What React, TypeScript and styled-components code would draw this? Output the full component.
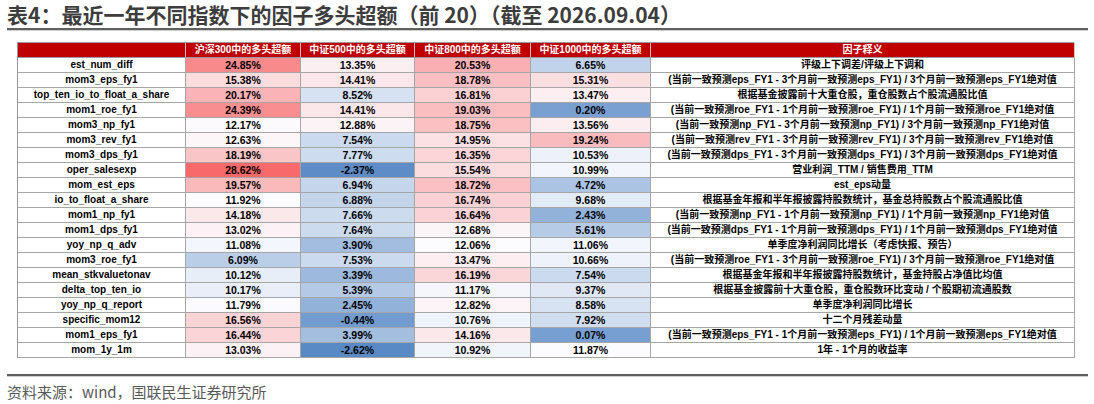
import React from "react";
import styled, { createGlobalStyle } from "styled-components";

const GlobalStyle = createGlobalStyle`
  html, body { margin: 0; padding: 0; background: #ffffff; }
  body { font-family: "Liberation Sans", "Noto Sans CJK SC", sans-serif; }
`;

type Row = [string, number, number, number, number, string];

const rows: Row[] = [
  ["est_num_diff", 24.85, 13.35, 20.53, 6.65, "评级上下调差/评级上下调和"],
  ["mom3_eps_fy1", 15.38, 14.41, 18.78, 15.31, "(当前一致预测eps_FY1 - 3个月前一致预测eps_FY1) / 3个月前一致预测eps_FY1绝对值"],
  ["top_ten_io_to_float_a_share", 20.17, 8.52, 16.81, 13.47, "根据基金披露前十大重仓股，重仓股数占个股流通股比值"],
  ["mom1_roe_fy1", 24.39, 14.41, 19.03, 0.2, "(当前一致预测roe_FY1 - 1个月前一致预测roe_FY1) / 1个月前一致预测roe_FY1绝对值"],
  ["mom3_np_fy1", 12.17, 12.88, 18.75, 13.56, "(当前一致预测np_FY1 - 3个月前一致预测np_FY1) / 3个月前一致预测np_FY1绝对值"],
  ["mom3_rev_fy1", 12.63, 7.54, 14.95, 19.24, "(当前一致预测rev_FY1 - 3个月前一致预测rev_FY1) / 3个月前一致预测rev_FY1绝对值"],
  ["mom3_dps_fy1", 18.19, 7.77, 16.35, 10.53, "(当前一致预测dps_FY1 - 3个月前一致预测dps_FY1) / 3个月前一致预测dps_FY1绝对值"],
  ["oper_salesexp", 28.62, -2.37, 15.54, 10.99, "营业利润_TTM / 销售费用_TTM"],
  ["mom_est_eps", 19.57, 6.94, 18.72, 4.72, "est_eps动量"],
  ["io_to_float_a_share", 11.92, 6.88, 16.74, 9.68, "根据基金年报和半年报披露持股数统计，基金总持股数占个股流通股比值"],
  ["mom1_np_fy1", 14.18, 7.66, 16.64, 2.43, "(当前一致预测np_FY1 - 1个月前一致预测np_FY1) / 1个月前一致预测np_FY1绝对值"],
  ["mom1_dps_fy1", 13.02, 7.64, 12.68, 5.61, "(当前一致预测dps_FY1 - 1个月前一致预测dps_FY1) / 1个月前一致预测dps_FY1绝对值"],
  ["yoy_np_q_adv", 11.08, 3.9, 12.06, 11.06, "单季度净利润同比增长（考虑快报、预告）"],
  ["mom3_roe_fy1", 6.09, 7.53, 13.47, 10.66, "(当前一致预测roe_FY1 - 3个月前一致预测roe_FY1) / 3个月前一致预测roe_FY1绝对值"],
  ["mean_stkvaluetonav", 10.12, 3.39, 16.19, 7.54, "根据基金年报和半年报披露持股数统计，基金持股占净值比均值"],
  ["delta_top_ten_io", 10.17, 5.39, 11.17, 9.37, "根据基金披露前十大重仓股，重仓股数环比变动 / 个股期初流通股数"],
  ["yoy_np_q_report", 11.79, 2.45, 12.82, 8.58, "单季度净利润同比增长"],
  ["specific_mom12", 16.56, -0.44, 10.76, 7.92, "十二个月残差动量"],
  ["mom1_eps_fy1", 16.44, 3.99, 14.16, 0.07, "(当前一致预测eps_FY1 - 1个月前一致预测eps_FY1) / 1个月前一致预测eps_FY1绝对值"],
  ["mom_1y_1m", 13.03, -2.62, 10.92, 11.87, "1年 - 1个月的收益率"],
];

const headers = ["", "沪深300中的多头超额", "中证500中的多头超额", "中证800中的多头超额", "中证1000中的多头超额", "因子释义"];

const allValues = rows.flatMap((r) => [r[1], r[2], r[3], r[4]]).sort((a, b) => a - b);
const minV = allValues[0];
const maxV = allValues[allValues.length - 1];
const midV = (allValues[allValues.length / 2 - 1] + allValues[allValues.length / 2]) / 2;

const BLUE = [90, 138, 198];
const WHITE = [252, 252, 255];
const RED = [248, 105, 107];

function scaleColor(v: number): string {
  const from = WHITE;
  let to = WHITE;
  let t = 0;
  if (v >= midV) {
    to = RED;
    t = (v - midV) / (maxV - midV);
  } else {
    to = BLUE;
    t = (midV - v) / (midV - minV);
  }
  const c = from.map((f, i) => Math.round(f + (to[i] - f) * t));
  return `rgb(${c[0]}, ${c[1]}, ${c[2]})`;
}

const Page = styled.div`
  width: 1094px;
  height: 404px;
  padding: 0 6px 0 7px;
  box-sizing: border-box;
  display: flex;
  flex-direction: column;
`;

const Title = styled.div`
  height: 28px;
  line-height: 29px;
  font-family: "Noto Sans CJK SC", sans-serif;
  font-size: 21px;
  font-weight: 700;
  color: #3d3d3d;
  white-space: pre;
  border-bottom: 2px solid #5f5f5f;
  box-shadow: 0 1px 0 #cfcfcf;
`;

const TableWrap = styled.div`
  margin: 12px 0 0 10px;
`;

const Table = styled.div`
  display: grid;
  grid-template-columns: 168px 115px 114px 116px 120px 424px;
  grid-auto-rows: 15px;
  width: 1057px;
  border-left: 1px solid #9a9a9a;
  border-top: 1px solid #9a9a9a;
  box-sizing: border-box;
`;

const Cell = styled.div`
  box-sizing: border-box;
  border-right: 1px solid #a6a6a6;
  border-bottom: 1px solid #a6a6a6;
  display: flex;
  align-items: center;
  justify-content: center;
  font-size: 10px;
  font-weight: 700;
  color: #000;
  white-space: nowrap;
  overflow: hidden;
  line-height: 14px;
`;

const HeadCell = styled(Cell)`
  background: #c00000;
  color: #ffffff;
  border-right-color: #e6b8b8;
  border-bottom-color: #9a9a9a;
`;

const NameCell = styled(Cell)`
  background: #ffffff;
`;

const ValueCell = styled(Cell)<{ $bg: string }>`
  background: ${(p) => p.$bg};
  font-size: 10.5px;
`;

const DescCell = styled(Cell)`
  background: #ffffff;
`;

const BottomRule = styled.div`
  margin-top: 16px;
  border-bottom: 2px solid #5f5f5f;
  box-shadow: 0 1px 0 #cfcfcf;
`;

const Source = styled.div`
  margin-top: 6px;
  font-family: "Noto Sans CJK SC", sans-serif;
  font-size: 15px;
  line-height: 20px;
  color: #595959;
`;

export default function App() {
  return (
    <>
      <GlobalStyle />
      <Page>
        <Title>表4：最近一年不同指数下的因子多头超额（前 20）（截至 2026.09.04）</Title>
        <TableWrap>
          <Table>
            {headers.map((h, i) => (
              <HeadCell key={`h${i}`}>{h}</HeadCell>
            ))}
            {rows.map((r) => (
              <React.Fragment key={r[0]}>
                <NameCell>{r[0]}</NameCell>
                {[r[1], r[2], r[3], r[4]].map((v, j) => (
                  <ValueCell key={j} $bg={scaleColor(v)}>
                    {v.toFixed(2)}%
                  </ValueCell>
                ))}
                <DescCell>{r[5]}</DescCell>
              </React.Fragment>
            ))}
          </Table>
        </TableWrap>
        <BottomRule />
        <Source>资料来源：wind，国联民生证券研究所</Source>
      </Page>
    </>
  );
}
